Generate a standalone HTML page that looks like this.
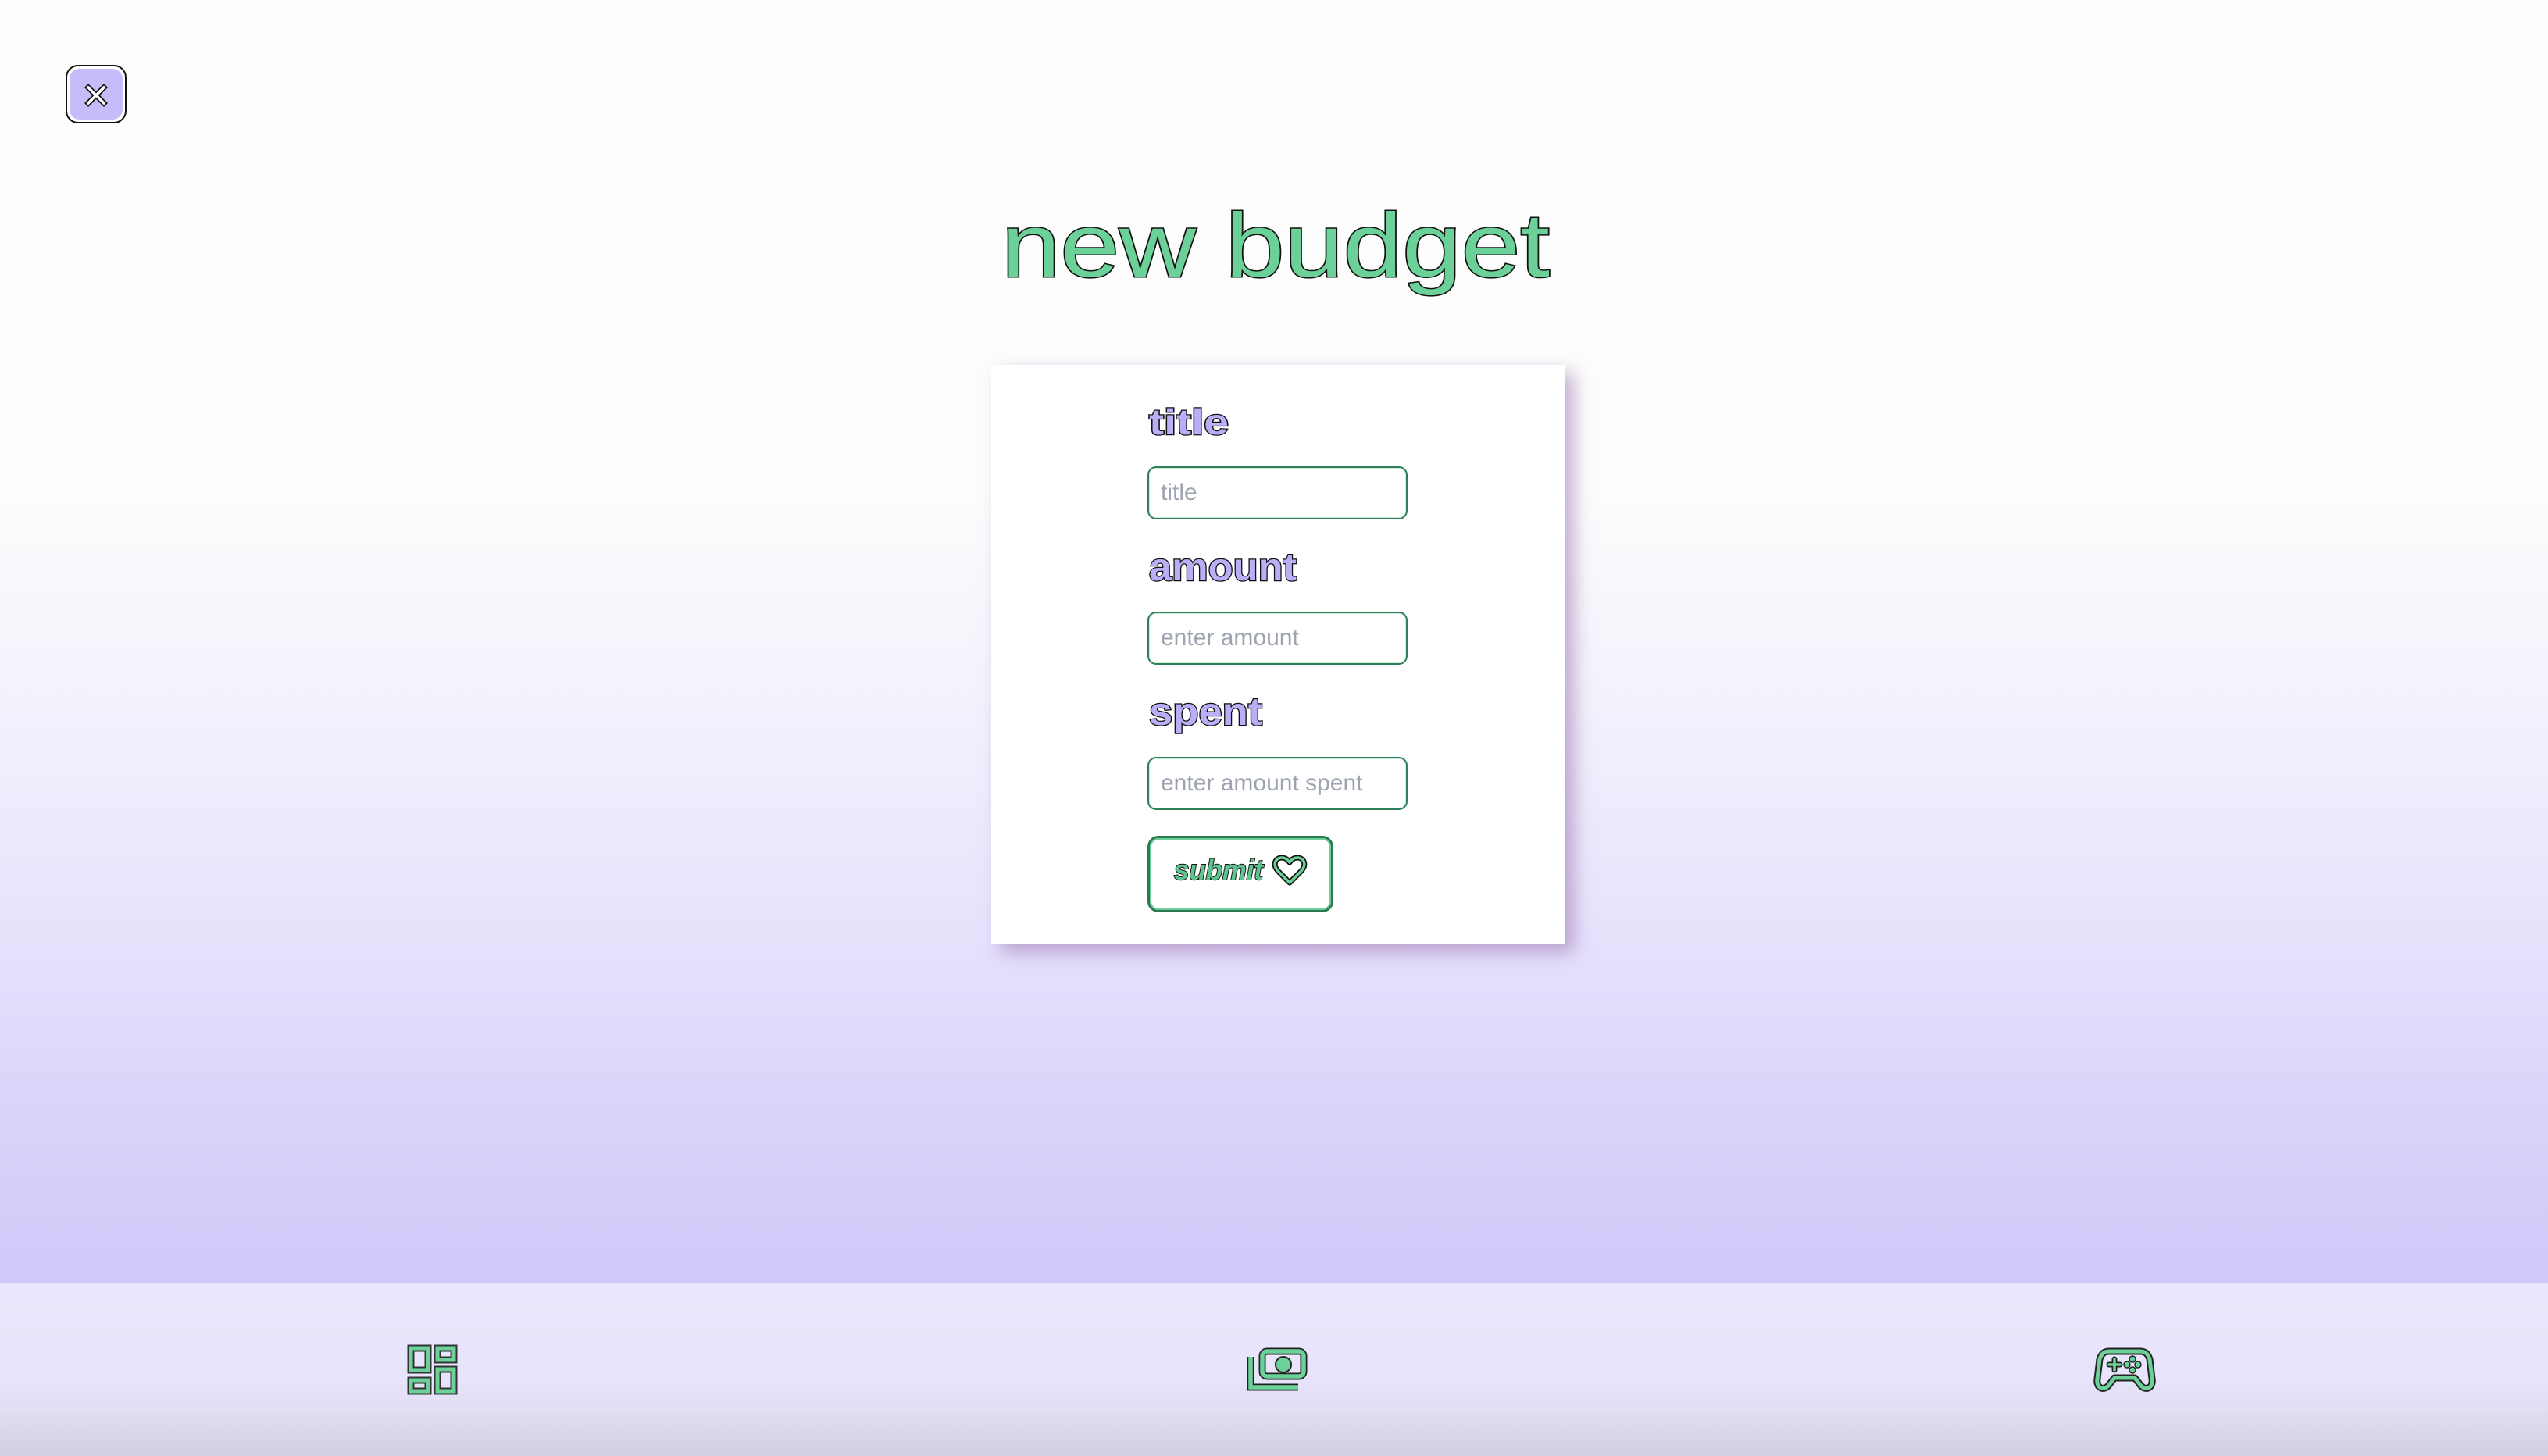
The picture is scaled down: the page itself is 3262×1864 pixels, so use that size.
<!DOCTYPE html>
<html><head><meta charset="utf-8"><style>
html,body{margin:0;padding:0}
body{width:3262px;height:1864px;position:relative;overflow:hidden;font-family:"Liberation Sans",sans-serif;
background:linear-gradient(180deg,#fdfdfd 0px,#fdfdfd 630px,#f3f1fc 900px,#e9e5fd 1150px,#dcd5fa 1400px,#cfc7f8 1643px);}
.close{position:absolute;left:84px;top:83px;width:74px;height:71px;border:2px solid #111;border-radius:16px;background:#fff;}
.close div{position:absolute;left:3px;top:3px;right:3px;bottom:3px;background:#c5bcf9;border-radius:13px}
.card{position:absolute;left:1269px;top:467px;width:734px;height:742px;background:#fff;box-shadow:12px 10px 22px rgba(150,110,170,0.55);}
.inp{position:absolute;left:1469px;width:329px;height:64px;border:2px solid #2f7f5a;border-radius:11px;background:#fff;
box-shadow:inset 0 0 0 1px rgba(107,209,152,0.35);font-size:30px;color:#9ea3b0;line-height:64px;box-sizing:content-box}
.inp span{position:absolute;left:15px;top:0}
.btn{position:absolute;left:1469px;top:1070px;width:232px;height:92px;border:3px solid #2b7a55;border-radius:14px;box-shadow:inset 0 0 0 2px #6bd198;background:#fff}
.nav{position:absolute;left:0;top:1643px;width:3262px;height:221px;background:linear-gradient(180deg,#ebe8fe 0,#e7e4fb 120px,#e2def4 160px,#d2cee3 221px)}
svg{position:absolute;left:0;top:0;overflow:visible}
</style></head><body>
<div class="close"><div></div></div>
<svg width="3262" height="1864">
 <g stroke="#111" stroke-width="7" stroke-linecap="square"><line x1="113" y1="112" x2="133" y2="132"/><line x1="133" y1="112" x2="113" y2="132"/></g>
 <g stroke="#fff" stroke-width="3.5" stroke-linecap="square"><line x1="113" y1="112" x2="133" y2="132"/><line x1="133" y1="112" x2="113" y2="132"/></g>
 <text x="1282" y="354" font-family="Liberation Sans" font-size="116" textLength="702" lengthAdjust="spacingAndGlyphs" fill="#6bd198" stroke="#111" stroke-width="3" paint-order="stroke">new budget</text>
</svg>
<div class="card"></div>
<div class="inp" style="top:597px"><span>title</span></div>
<div class="inp" style="top:783px"><span>enter amount</span></div>
<div class="inp" style="top:969px"><span>enter amount spent</span></div>
<div class="btn"></div>
<div class="nav"></div>
<svg width="3262" height="1864">
 <g font-family="Liberation Sans" font-weight="bold" fill="#b9aff7" stroke="#111" stroke-width="2.5" paint-order="stroke">
  <text x="1471" y="556" font-size="46" textLength="102" lengthAdjust="spacingAndGlyphs">title</text>
  <text x="1471" y="743" font-size="50" textLength="189" lengthAdjust="spacingAndGlyphs">amount</text>
  <text x="1471" y="928" font-size="50" textLength="145" lengthAdjust="spacingAndGlyphs">spent</text>
 </g>
 <text x="1503" y="1126" font-family="Liberation Sans" font-weight="bold" font-style="italic" font-size="36" textLength="114" lengthAdjust="spacingAndGlyphs" fill="#5fc48d" stroke="#111" stroke-width="2" paint-order="stroke">submit</text>
 <path d="M1651 1130 L1637 1116 C1628 1107 1633 1098 1641 1098 C1646 1098 1649 1101 1651 1104 C1653 1101 1656 1098 1661 1098 C1669 1098 1674 1107 1665 1116 Z" fill="none" stroke="#111" stroke-width="7" stroke-linejoin="round"/>
 <path d="M1651 1130 L1637 1116 C1628 1107 1633 1098 1641 1098 C1646 1098 1649 1101 1651 1104 C1653 1101 1656 1098 1661 1098 C1669 1098 1674 1107 1665 1116 Z" fill="none" stroke="#6bd198" stroke-width="3.5" stroke-linejoin="round"/>
 <g fill="none">
  <g stroke="#333" stroke-width="9">
   <rect x="526" y="1726" width="22" height="28"/><rect x="560" y="1726" width="21" height="15"/>
   <rect x="526" y="1767" width="22" height="14"/><rect x="560" y="1753" width="21" height="28"/></g>
  <g stroke="#6bd198" stroke-width="5">
   <rect x="526" y="1726" width="22" height="28"/><rect x="560" y="1726" width="21" height="15"/>
   <rect x="526" y="1767" width="22" height="14"/><rect x="560" y="1753" width="21" height="28"/></g>
 </g>
 <g fill="none">
  <g stroke="#222" stroke-width="9">
   <rect x="1616" y="1730" width="53" height="32" rx="6"/>
   <path d="M1601 1737 V1776 H1662"/>
  </g>
  <g stroke="#6bd198" stroke-width="5.5">
   <rect x="1616" y="1730" width="53" height="32" rx="6"/>
   <path d="M1601 1737 V1776 H1662"/>
  </g>
  <circle cx="1643" cy="1747" r="10" fill="#6bd198" stroke="#222" stroke-width="2"/>
 </g>
 <g fill="none" stroke-linejoin="round" stroke-linecap="round">
  <path d="M2700 1730 H2740 C2747 1730 2750 1734 2752 1740 L2755 1765 C2757 1778 2746 1781 2740 1773 L2733 1764 H2707 L2700 1773 C2694 1781 2683 1778 2685 1765 L2688 1740 C2690 1734 2693 1730 2700 1730 Z" stroke="#222" stroke-width="9"/>
  <path d="M2700 1730 H2740 C2747 1730 2750 1734 2752 1740 L2755 1765 C2757 1778 2746 1781 2740 1773 L2733 1764 H2707 L2700 1773 C2694 1781 2683 1778 2685 1765 L2688 1740 C2690 1734 2693 1730 2700 1730 Z" stroke="#6bd198" stroke-width="5"/>
  <path d="M2707 1740 V1754 M2700 1747 H2714" stroke="#222" stroke-width="7"/>
  <path d="M2707 1740 V1754 M2700 1747 H2714" stroke="#6bd198" stroke-width="3.5"/>
 </g>
 <g fill="#6bd198" stroke="#222" stroke-width="1.5">
  <circle cx="2730" cy="1740" r="4"/><circle cx="2730" cy="1754" r="4"/><circle cx="2723" cy="1747" r="4"/><circle cx="2737" cy="1747" r="4"/>
 </g>
</svg>
</body></html>
